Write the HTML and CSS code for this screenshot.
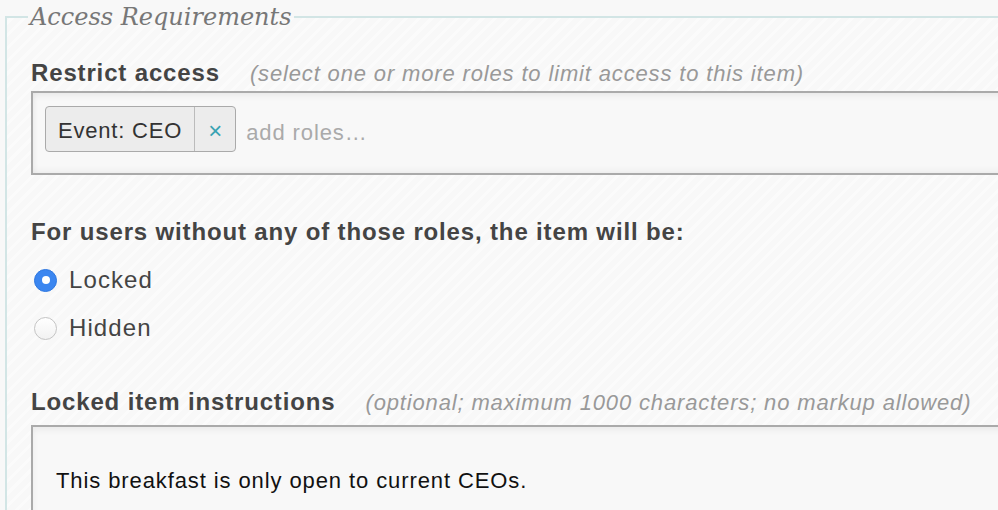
FILE: index.html
```html
<!DOCTYPE html>
<html>
<head>
<meta charset="utf-8">
<link rel="stylesheet" href="styles.css">
</head>
<body>
<fieldset class="panel">
  <legend class="panel-title">Access Requirements</legend>
  <div class="field-label field-label-first">
    <span class="label-text">Restrict access</span>
    <span class="hint">(select one or more roles to limit access to this item)</span>
  </div>
  <div class="tag-box">
    <span class="tag"><span class="tag-name">Event: CEO</span><span class="tag-remove">×</span></span>
    <span class="placeholder">add roles…</span>
  </div>
  <div class="field-label field-label-question">
    <span class="label-text">For users without any of those roles, the item will be:</span>
  </div>
  <div class="radio-row radio-first">
    <span class="radio radio-on"></span>
    <span class="radio-label">Locked</span>
  </div>
  <div class="radio-row">
    <span class="radio radio-off"></span>
    <span class="radio-label">Hidden</span>
  </div>
  <div class="field-label field-label-instructions">
    <span class="label-text">Locked item instructions</span>
    <span class="hint hint-wide">(optional; maximum 1000 characters; no markup allowed)</span>
  </div>
  <div class="text-box">This breakfast is only open to current CEOs.</div>
</fieldset>
</body>
</html>
```

FILE: styles.css
```css
html, body {
  margin: 0;
  padding: 0;
  width: 998px;
  height: 510px;
  overflow: hidden;
  background: #f8f8f8;
}

body {
  font-family: "Liberation Sans", Arial, sans-serif;
  color: #444;
}

.panel {
  box-sizing: border-box;
  width: 1100px;
  margin: 0 0 0 5px;
  padding: 0 0 40px 24px;
  border: 2px solid #d2e5e5;
  min-inline-size: 0;
  display: flex;
  flex-direction: column;
  align-items: flex-start;
  background: repeating-linear-gradient(-45deg, #f8f8f8 0px, #f8f8f8 6px, #fbfbfb 6px, #fbfbfb 9px);
}

.panel > * {
  flex-shrink: 0;
}

.panel-title {
  font-family: "DejaVu Serif", Georgia, serif;
  font-style: italic;
  font-size: 24px;
  line-height: 34px;
  color: #777;
  padding: 0 2px;
  margin-left: -3px;
}

.field-label {
  display: flex;
  align-items: baseline;
  line-height: 26px;
  height: 26px;
  white-space: nowrap;
}

.field-label-first {
  margin-top: 26px;
}

.label-text {
  font-weight: bold;
  font-size: 24px;
  letter-spacing: 0.85px;
  color: #444;
}

.hint {
  font-style: italic;
  font-size: 22px;
  letter-spacing: 0.85px;
  color: #999;
  margin-left: 30px;
}

.tag-box {
  box-sizing: border-box;
  margin-top: 5px;
  width: 1100px;
  height: 84px;
  padding: 13px 12px;
  border: 2px solid #aaa;
  background: #f8f8f8;
  box-shadow: inset 0 3px 6px rgba(0, 0, 0, 0.06), inset 0 -3px 6px rgba(0, 0, 0, 0.04);
  display: flex;
  align-items: flex-start;
}

.tag {
  box-sizing: border-box;
  height: 46px;
  display: flex;
  align-items: stretch;
  border: 1px solid #aaa;
  border-radius: 4px;
  background: #ececec;
  font-size: 22px;
  letter-spacing: 0.8px;
  color: #333;
}

.tag-name {
  display: flex;
  align-items: center;
  padding: 3px 12px 0 12px;
}

.tag-remove {
  display: flex;
  align-items: center;
  justify-content: center;
  width: 40px;
  padding-top: 3px;
  border-left: 1px solid #bbb;
  color: #3aa3b3;
  font-size: 24px;
  letter-spacing: 0;
}

.placeholder {
  align-self: center;
  margin-left: 10px;
  font-size: 22px;
  letter-spacing: 0.9px;
  color: #aaa;
  line-height: 46px;
}

.field-label-question {
  margin-top: 44px;
}

.radio-row {
  display: flex;
  align-items: center;
  height: 48px;
}

.radio-first {
  margin-top: 11px;
}

.radio {
  box-sizing: border-box;
  width: 23px;
  height: 23px;
  border-radius: 50%;
  margin-left: 3px;
  margin-right: 12px;
}

.radio-on {
  background: #3b86f0;
  border: 1px solid #2f78e0;
  display: flex;
  align-items: center;
  justify-content: center;
}

.radio-on::after {
  content: "";
  width: 8px;
  height: 8px;
  border-radius: 50%;
  background: #fff;
}

.radio-off {
  background: linear-gradient(#ffffff, #f2f2f2);
  border: 1px solid #c4c4c4;
}

.radio-label {
  font-size: 24px;
  letter-spacing: 1.1px;
  color: #444;
}

.field-label-instructions {
  margin-top: 37px;
}

.hint-wide {
  margin-left: 30px;
}

.text-box {
  box-sizing: border-box;
  margin-top: 10px;
  width: 1100px;
  height: 140px;
  padding: 40px 23px;
  border: 2px solid #aaa;
  background: #f8f8f8;
  box-shadow: inset 0 3px 6px rgba(0, 0, 0, 0.06);
  font-size: 22px;
  letter-spacing: 0.9px;
  line-height: 28px;
  color: #111;
}
```
